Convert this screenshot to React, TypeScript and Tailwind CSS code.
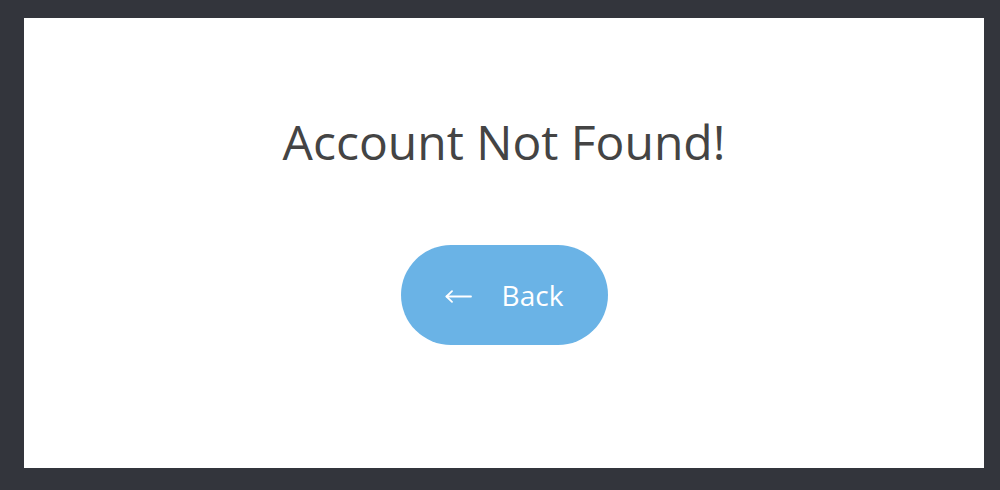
export default function App() {
  return (
    <div className="w-[1000px] h-[490px] bg-[#33353c] pt-[18px] pl-[24px]" style={{ fontFamily: '"Open Sans", sans-serif' }}>
      <div className="w-[960px] h-[450px] bg-white flex flex-col items-center">
        <h1 className="mt-[94px] text-[48px] leading-[60px] text-[#444444] font-normal">Account Not Found!</h1>
        <button className="mt-[73px] w-[207px] h-[100px] rounded-full bg-[#6ab3e6] text-white text-[28px] flex items-center justify-center gap-[30px]">
          <svg width="27" height="13" viewBox="0 0 27 13" fill="none" stroke="white" strokeWidth="1.8" strokeLinecap="round" strokeLinejoin="round" className="mt-[3px]">
            <path d="M1.5 6.5H26" />
            <path d="M7 1.2L1.5 6.5L7 11.8" />
          </svg>
          <span className="leading-none">Back</span>
        </button>
      </div>
    </div>
  );
}
